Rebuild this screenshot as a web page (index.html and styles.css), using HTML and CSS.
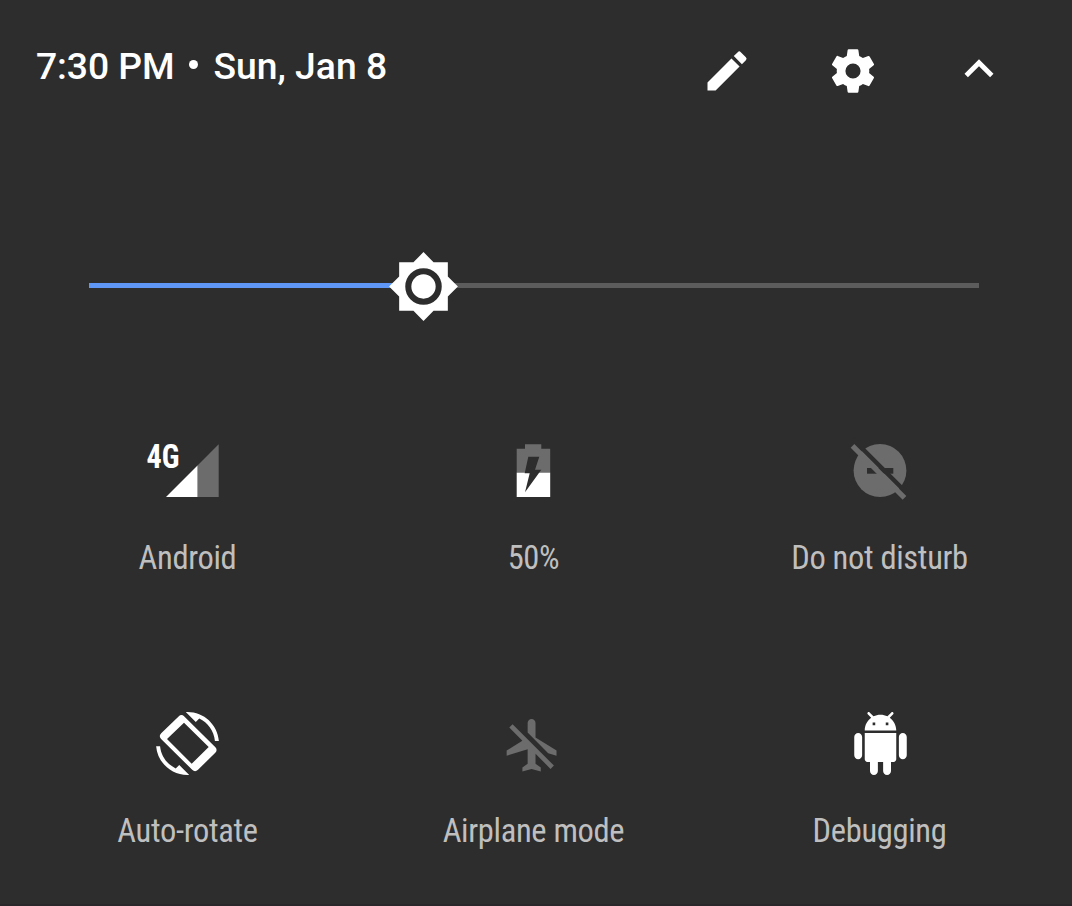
FILE: index.html
```html
<!DOCTYPE html>
<html lang="en">
<head>
<meta charset="utf-8">
<title>Quick Settings</title>
<link rel="stylesheet" href="styles.css">
</head>
<body>
<main class="panel">
  <header class="header">
    <div class="clock"><span class="time">7:30 PM</span><span class="dot"></span><span class="date">Sun, Jan 8</span></div>
    <nav class="actions">
      <span class="action"><svg class="action-icon" viewBox="0 0 24 24"><path d="M3 17.25V21h3.75L17.81 9.94l-3.75-3.75L3 17.25zM20.71 7.04a1 1 0 0 0 0-1.41l-2.34-2.34a1 1 0 0 0-1.41 0l-1.83 1.83 3.75 3.75 1.83-1.83z"/></svg></span>
      <span class="action"><svg class="action-icon" viewBox="0 0 24 24"><path d="M19.43 12.98c.04-.32.07-.64.07-.98s-.03-.66-.07-.98l2.11-1.65c.19-.15.24-.42.12-.64l-2-3.46c-.12-.22-.39-.3-.61-.22l-2.49 1c-.52-.4-1.08-.73-1.69-.98l-.38-2.65C14.46 2.18 14.25 2 14 2h-4c-.25 0-.46.18-.49.42l-.38 2.65c-.61.25-1.17.59-1.69.98l-2.49-1c-.23-.09-.49 0-.61.22l-2 3.46c-.13.22-.07.49.12.64l2.11 1.65c-.04.32-.07.65-.07.98s.03.66.07.98l-2.11 1.65c-.19.15-.24.42-.12.64l2 3.46c.12.22.39.3.61.22l2.49-1c.52.4 1.08.73 1.69.98l.38 2.65c.03.24.24.42.49.42h4c.25 0 .46-.18.49-.42l.38-2.65c.61-.25 1.17-.59 1.69-.98l2.49 1c.23.09.49 0 .61-.22l2-3.46c.12-.22.07-.49-.12-.64l-2.11-1.65zM12 15.5a3.5 3.5 0 1 1 0-7 3.5 3.5 0 0 1 0 7z"/></svg></span>
      <span class="action"><svg class="action-icon chevron" viewBox="0 0 24 24"><path d="M12 8l-6 6 1.41 1.41L12 10.83l4.59 4.58L18 14z"/></svg></span>
    </nav>
  </header>

  <div class="slider">
    <div class="track"><div class="fill"></div></div>
    <svg class="thumb" viewBox="0 0 24 24"><path fill="#fff" d="M20 8.69V4h-4.69L12 .69 8.69 4H4v4.69L.69 12 4 15.31V20h4.69L12 23.31 15.31 20H20v-4.69L23.31 12z"/><circle cx="12" cy="12" r="5" fill="#fff" stroke="#2d2d2d" stroke-width="2"/></svg>
  </div>

  <section class="tiles">
    <div class="tile">
      <svg class="tile-icon" viewBox="0 0 63 63"><path class="off" d="M62.7 5.3V58H41.5V26.5z"/><path d="M10 58h31.5V26.5z"/><text class="network" x="-9.5" y="29" textLength="33" lengthAdjust="spacingAndGlyphs">4G</text></svg>
      <span class="label">Android</span>
    </div>
    <div class="tile">
      <svg class="tile-icon" viewBox="0 0 63 63"><path class="off" d="M14.7 34V9.7H23V5.2h16.3v4.5h8.9V34z"/><path d="M14.7 33.7h33.5V58H14.7z"/><path class="cut" d="M26.3 17.7h11l-4.3 13h6.3L23 53.3l4.7-19h-5z"/></svg>
      <span class="label">50%</span>
    </div>
    <div class="tile">
      <svg class="tile-icon" viewBox="0 0 63 63"><circle class="off" cx="32" cy="31.5" r="26.4"/><path class="cut" d="M19 29h26.3v5.7H19z"/><path class="cut-line" d="M5 .3l56 56"/><path class="off-line" d="M4.5 6.8l52 52"/></svg>
      <span class="label">Do not disturb</span>
    </div>
    <div class="tile">
      <svg class="tile-icon" viewBox="0 0 63 63"><path transform="scale(2.625)" d="M16.48 2.52c3.27 1.55 5.61 4.72 5.97 8.48h1.5C23.44 4.84 18.29 0 12 0l-.66.03 3.81 3.81zM7.52 21.48C4.25 19.94 1.91 16.76 1.55 13H.05C.56 19.16 5.71 24 12 24l.66-.03-3.81-3.81z"/><path fill-rule="evenodd" d="M22.6 4.4Q25.5 1.8 28.3 4.5L59.4 35.2Q61.8 38 59.3 40.7L42 57.8Q39 60.6 36.2 57.8L5.1 26.9Q2.4 24 5.2 21.2zM28 10.7L11 27l24.7 24.7 17-16.7z"/></svg>
      <span class="label">Auto-rotate</span>
    </div>
    <div class="tile">
      <svg class="tile-icon" viewBox="0 0 63 63"><path class="off" transform="translate(-.6 1.75) scale(2.625)" d="M13 9V3.5c0-.83-.67-1.5-1.5-1.5S10 2.67 10 3.5v3.68l7.83 7.83L21 16v-2l-8-5zM3 5.27l4.99 4.99L2 14v2l8-2.5V19l-2 1.5V22l3.5-1 3.5 1v-1.5L13 19v-3.73L18.73 21 20 19.73 4.27 4z"/></svg>
      <span class="label">Airplane mode</span>
    </div>
    <div class="tile">
      <svg class="tile-icon" viewBox="0 0 63 63"><path transform="translate(1 0) scale(2.625)" d="M6 18c0 .55.45 1 1 1h1v3.5c0 .83.67 1.5 1.5 1.5s1.5-.67 1.5-1.5V19h2v3.5c0 .83.67 1.5 1.5 1.5s1.5-.67 1.5-1.5V19h1c.55 0 1-.45 1-1V8H6v10zM3.5 8C2.67 8 2 8.67 2 9.5v7c0 .83.67 1.5 1.5 1.5S5 17.33 5 16.5v-7C5 8.67 4.33 8 3.5 8zm17 0c-.83 0-1.5.67-1.5 1.5v7c0 .83.67 1.5 1.5 1.5s1.5-.67 1.5-1.5v-7c0-.83-.67-1.5-1.5-1.5zm-4.97-5.84l1.3-1.3c.2-.2.2-.51 0-.71-.2-.2-.51-.2-.71 0l-1.48 1.48C13.85 1.23 12.95 1 12 1c-.96 0-1.86.23-2.66.63L7.85.15c-.2-.2-.51-.2-.71 0-.2.2-.2.51 0 .71l1.31 1.31C6.97 3.26 6 5.01 6 7h12c0-1.99-.97-3.75-2.47-4.84zM10 5H9V4h1v1zm5 0h-1V4h1v1z"/></svg>
      <span class="label">Debugging</span>
    </div>
  </section>
</main>
</body>
</html>
```
FILE: styles.css
```css
* { box-sizing: border-box; }

body {
  margin: 0;
  background: #2d2d2d;
  font-family: Roboto, sans-serif;
  color: #fff;
}

.panel {
  width: 1072px;
  height: 906px;
  overflow: hidden;
  border-bottom: 2px solid #2a272a;
}

.header {
  display: flex;
  justify-content: space-between;
  height: 142px;
  padding: 0 30px 0 36px;
}

.clock {
  display: flex;
  align-items: center;
  height: 132px;
  font-size: 37.3px;
  font-weight: 500;
  white-space: nowrap;
}

.time { letter-spacing: -0.1px; }

.dot {
  width: 9px;
  height: 9px;
  margin: 0 15.5px 3px 14.5px;
  border-radius: 50%;
  background: #fff;
}

.actions { display: flex; }

.action {
  display: flex;
  align-items: center;
  justify-content: center;
  width: 126px;
  height: 141px;
}

.action-icon {
  width: 52px;
  height: 52px;
  fill: #fff;
}

.chevron {
  width: 58px;
  height: 58px;
  margin: 0 0 3px;
}

.slider {
  position: relative;
  width: 890px;
  height: 72px;
  margin: 108px 0 0 89px;
  padding-top: 33px;
}

.track {
  height: 5px;
  background: #5c5c5c;
}

.fill {
  width: 37.6%;
  height: 5px;
  background: #5e97f6;
}

.thumb {
  position: absolute;
  top: 0;
  left: 298px;
  width: 73px;
  height: 73px;
}

.tiles {
  display: grid;
  grid-template-columns: repeat(3, 346px);
  grid-template-rows: 273px 273px;
  margin: 117px 0 0 14.5px;
}

.tile {
  display: flex;
  flex-direction: column;
  align-items: center;
}

.tile-icon {
  width: 63px;
  height: 63px;
  overflow: visible;
  fill: #fff;
}

.off { fill: #6c6c6c; }
.cut { fill: #2d2d2d; }
.cut-line { stroke: #2d2d2d; stroke-width: 4.4; }
.off-line { stroke: #6c6c6c; stroke-width: 5.2; }

.network {
  font-family: "Roboto Condensed", Roboto, sans-serif;
  font-size: 33px;
  font-weight: 700;
  font-stretch: 75%;
}

.label {
  margin-top: 37px;
  font-family: "Roboto Condensed", Roboto, sans-serif;
  font-size: 32.5px;
  letter-spacing: -0.32px;
  font-stretch: 75%;
  line-height: 38px;
  white-space: nowrap;
  color: #bfbfbf;
}
```
